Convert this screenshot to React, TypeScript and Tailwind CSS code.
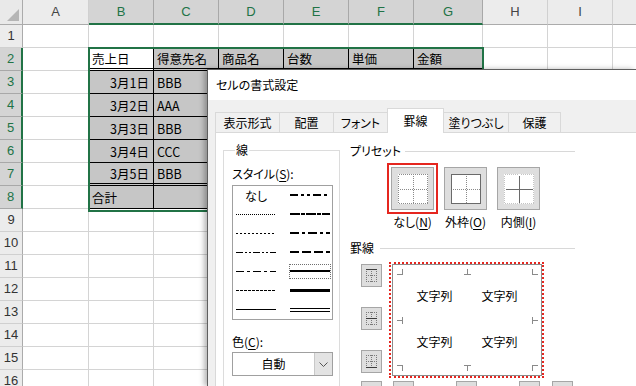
import React from "react";

// Excel のシート + 「セルの書式設定」ダイアログ(罫線タブ)
const COLS = ["A", "B", "C", "D", "E", "F", "G", "H", "I", "J"];
const SEL = new Set(["B", "C", "D", "E", "F", "G"]);
const ROWS = Array.from({ length: 16 }, (_, i) => i + 1);

const DATA: Record<string, string> = {
  B2: "売上日",
  C2: "得意先名",
  D2: "商品名",
  E2: "台数",
  F2: "単価",
  G2: "金額",
  B3: "3月1日",
  C3: "BBB",
  B4: "3月2日",
  C4: "AAA",
  B5: "3月3日",
  C5: "BBB",
  B6: "3月4日",
  C6: "CCC",
  B7: "3月5日",
  C7: "BBB",
  B8: "合計",
};

function Corner() {
  return (
    <div className="flex items-end justify-end border-b border-r border-[#ababab] bg-[#e9e9e9] p-[3px]">
      <svg width="12" height="12">
        <polygon points="12,0 12,12 0,12" fill="#b5b5b5" />
      </svg>
    </div>
  );
}

function ColHead({ c }: { c: string }) {
  const sel = SEL.has(c);
  return (
    <div
      className={
        sel
          ? "flex items-center justify-center border-r border-r-[#a8a8a8] border-b-2 border-b-[#217346] bg-[#d4d4d4] text-[13px] text-[#217346] [font-family:'Liberation_Sans',sans-serif]"
          : "flex items-center justify-center border-r border-r-[#d0d0d0] border-b border-b-[#ababab] bg-[#ececec] text-[13px] text-[#444] [font-family:'Liberation_Sans',sans-serif]"
      }
    >
      {c}
    </div>
  );
}

function RowHead({ r }: { r: number }) {
  const sel = r >= 2 && r <= 8;
  return (
    <div
      className={
        sel
          ? "flex items-center justify-center border-b border-b-[#a8a8a8] border-r-2 border-r-[#217346] bg-[#d4d4d4] text-[13px] text-[#217346] [font-family:'Liberation_Sans',sans-serif]"
          : "flex items-center justify-center border-b border-b-[#d0d0d0] border-r border-r-[#ababab] bg-[#ececec] text-[13px] text-[#333] [font-family:'Liberation_Sans',sans-serif]"
      }
    >
      {r}
    </div>
  );
}

function Cell({ c, r }: { c: string; r: number }) {
  const v = DATA[c + r];
  const inTable = SEL.has(c) && r >= 2 && r <= 8;
  const right = c === "B" && r >= 3 && r <= 7;
  let cls = "border-b border-r border-[#d4d4d4] bg-white";
  if (inTable) {
    const bg = c === "B" && r === 2 ? "bg-white" : "bg-[#c6c6c6]";
    const bottom =
      r === 2 || r === 7
        ? "border-b-[3px] border-double border-b-black"
        : "border-b border-b-black";
    cls = `${bg} border-r border-r-black ${bottom}`;
  }
  return (
    <div
      className={`${cls} flex items-center overflow-hidden whitespace-nowrap pt-[2px] text-[12.5px] text-black ${
        right ? "justify-end pr-[4px]" : "pl-[3px]"
      }`}
    >
      {v}
    </div>
  );
}

function Sheet() {
  return (
    <div className="relative">
      <div className="grid grid-cols-[23px_66px_65px_65px_65px_65px_65px_69px_65px_65px_65px] grid-rows-[25px_repeat(16,23px)]">
        <Corner />
        {COLS.map((c) => (
          <ColHead key={c} c={c} />
        ))}
        {ROWS.map((r) => (
          <React.Fragment key={r}>
            <RowHead r={r} />
            {COLS.map((c) => (
              <Cell key={c} c={c} r={r} />
            ))}
          </React.Fragment>
        ))}
      </div>
      {/* 選択範囲 B2:G8 */}
      <div className="absolute left-[88px] top-[47px] h-[165px] w-[396px] border-2 border-[#217346]" />
    </div>
  );
}

type Line = { dash?: string; w?: number; kind?: "text" | "double" | "sel" };

const LEFT_LINES: Line[] = [
  { kind: "text" },
  { dash: "1 1", w: 1 },
  { dash: "2 2", w: 1 },
  { dash: "7 2 2 2 2 2", w: 1 },
  { dash: "8 3 3 3", w: 1 },
  { dash: "3 1", w: 1 },
  { w: 1 },
];

const RIGHT_LINES: Line[] = [
  { dash: "8 3 3 3 3 3", w: 2 },
  { dash: "10 1 4 1", w: 2 },
  { dash: "9 3 3 3", w: 2 },
  { dash: "9 3", w: 2 },
  { kind: "sel", w: 2 },
  { w: 3 },
  { kind: "double" },
];

function LineSample({ l }: { l: Line }) {
  if (l.kind === "text") {
    return <div className="w-[40px] text-center leading-[19px]">なし</div>;
  }
  const svg = (
    <svg width="40" height="11" shapeRendering="crispEdges">
      {l.kind === "double" ? (
        <>
          <line x1="0" x2="40" y1="4.5" y2="4.5" stroke="#000" />
          <line x1="0" x2="40" y1="7.5" y2="7.5" stroke="#000" />
        </>
      ) : (
        <line
          x1="0"
          x2="40"
          y1={l.w === 2 ? 5 : 5.5}
          y2={l.w === 2 ? 5 : 5.5}
          stroke="#000"
          strokeWidth={l.w}
          strokeDasharray={l.dash}
        />
      )}
    </svg>
  );
  if (l.kind === "sel") {
    return (
      <div className="-ml-[1px] flex h-[15px] w-[42px] items-center border border-dotted border-[#6f6f6f]">
        {svg}
      </div>
    );
  }
  return svg;
}

function StyleList() {
  return (
    <div className="mt-[3px] h-[135px] w-[101px] border border-[#a0a0a0] bg-white">
      {LEFT_LINES.map((l, i) => (
        <div key={i} className="flex h-[19px]">
          <div className="flex w-[50px] items-center pl-[3px]">
            <LineSample l={l} />
          </div>
          <div className="flex items-center pl-[7px]">
            <LineSample l={RIGHT_LINES[i]} />
          </div>
        </div>
      ))}
    </div>
  );
}

function PresetIcon({ outline, cross }: { outline: "dot" | "solid" | "faint"; cross: "dot" | "solid" }) {
  const o =
    outline === "solid"
      ? { stroke: "#6a6a6a" }
      : outline === "dot"
      ? { stroke: "#8a8a8a", strokeDasharray: "1 1" }
      : { stroke: "#c4c4c4", strokeDasharray: "1 1" };
  const x = cross === "solid" ? { stroke: "#6a6a6a" } : { stroke: "#8a8a8a", strokeDasharray: "1 1" };
  return (
    <svg width="30" height="30" shapeRendering="crispEdges">
      <rect x="0" y="0" width="30" height="30" fill="#fff" />
      <rect x="0.5" y="0.5" width="29" height="29" fill="none" {...o} />
      <line x1="15.5" x2="15.5" y1="2" y2="29" {...x} />
      <line x1="2" x2="29" y1="15.5" y2="15.5" {...x} />
    </svg>
  );
}

function Preset({
  label,
  hot,
  selected,
  outline,
  cross,
}: {
  label: string;
  hot: string;
  selected?: boolean;
  outline: "dot" | "solid" | "faint";
  cross: "dot" | "solid";
}) {
  return (
    <div className="flex w-[51px] flex-col items-center">
      <div
        className={
          selected
            ? "border-2 border-[#e5261f] p-[2px]"
            : "border-2 border-transparent p-[2px]"
        }
      >
        <div className="flex h-[43px] w-[43px] items-center justify-center border border-[#a6a6a6] bg-[#dedede]">
          <PresetIcon outline={outline} cross={cross} />
        </div>
      </div>
      <div className="mt-[1px] whitespace-nowrap leading-[14px]">
        {label}(<span className="underline underline-offset-2">{hot}</span>)
      </div>
    </div>
  );
}

function EdgeIcon({ solid }: { solid: "top" | "mid" | "bottom" }) {
  const dot = { stroke: "#7a7a7a", strokeDasharray: "1 1" };
  const sol = { stroke: "#3c3c3c" };
  return (
    <svg width="11" height="13" shapeRendering="crispEdges">
      <line x1="0.5" x2="0.5" y1="0" y2="13" {...dot} />
      <line x1="10.5" x2="10.5" y1="0" y2="13" {...dot} />
      <line x1="5.5" x2="5.5" y1="0" y2="13" {...dot} />
      <line x1="0" x2="11" y1="0.5" y2="0.5" {...(solid === "top" ? sol : dot)} />
      <line x1="0" x2="11" y1="6.5" y2="6.5" {...(solid === "mid" ? sol : dot)} />
      <line x1="0" x2="11" y1="12.5" y2="12.5" {...(solid === "bottom" ? sol : dot)} />
    </svg>
  );
}

function EdgeButton({ solid }: { solid?: "top" | "mid" | "bottom" }) {
  return (
    <div className="flex h-[23px] w-[21px] items-center justify-center border border-[#a6a6a6] bg-[#dedede]">
      {solid && <EdgeIcon solid={solid} />}
    </div>
  );
}

function Preview() {
  const g = "#8a8a8a";
  return (
    <div className="ml-[7px] h-[116px] w-[155px] border-2 border-dotted border-[#e5261f] pl-[1px]">
      <div className="relative h-[112px] w-[150px] border border-[#8c8c8c] bg-white">
        <svg className="absolute left-0 top-0" width="150" height="112" shapeRendering="crispEdges">
          <g stroke={g}>
            <path d="M4 9.5H9.5V4" fill="none" />
            <path d="M145 9.5H139.5V4" fill="none" />
            <path d="M4 100.5H9.5V106" fill="none" />
            <path d="M145 100.5H139.5V106" fill="none" />
            <path d="M71 9.5H78M74.5 9.5V4" fill="none" />
            <path d="M71 100.5H78M74.5 100.5V106" fill="none" />
            <path d="M9.5 52V59M9.5 55.5H4" fill="none" />
            <path d="M139.5 52V59M139.5 55.5H145" fill="none" />
          </g>
        </svg>
        <div className="relative ml-[9px] mt-[8px] grid h-[92px] w-[130px] grid-cols-2 grid-rows-2 text-[12px] text-black">
          <div className="flex items-center justify-center">文字列</div>
          <div className="flex items-center justify-center">文字列</div>
          <div className="flex items-center justify-center">文字列</div>
          <div className="flex items-center justify-center">文字列</div>
        </div>
      </div>
    </div>
  );
}

const TABS = [
  { label: "表示形式", cls: "w-[65px]" },
  { label: "配置", cls: "w-[55px]" },
  { label: "フォント", cls: "w-[55px]" },
  { label: "罫線", cls: "w-[57px]", active: true },
  { label: "塗りつぶし", cls: "w-[66px]" },
  { label: "保護", cls: "w-[53px]" },
];

function Dialog() {
  return (
    <div className="absolute left-[207px] top-[69px] flex h-[317px] w-[429px] flex-col border-l border-t border-[#5f5f5f] bg-[#f0f0f0] text-[12px] text-black shadow-[-3px_0_5px_rgba(0,0,0,0.28)] [font-feature-settings:'palt']">
      <div className="flex h-[30px] shrink-0 items-center bg-white pl-[8px]">セルの書式設定</div>
      <div className="flex h-[32px] shrink-0 items-end pl-[7px]">
        {TABS.map((t) => (
          <div
            key={t.label}
            className={
              t.active
                ? `${t.cls} relative z-10 -mb-px -ml-px flex h-[25px] items-center justify-center border border-b-0 border-[#d9d9d9] bg-white`
                : `${t.cls} -ml-px flex h-[20px] items-center justify-center border border-b-0 border-[#d9d9d9] bg-[#f0f0f0] first:ml-0`
            }
          >
            {t.label}
          </div>
        ))}
      </div>
      <div className="ml-[7px] flex flex-1 border-l border-t border-[#d9d9d9] bg-white">
        <fieldset className="ml-[7px] mt-[9px] h-[260px] w-[117px] shrink-0 border border-[#dcdcdc] pl-[8px]">
          <legend className="ml-[3px] px-[1px] leading-[16px]">線</legend>
          <div className="mt-[8px] leading-[16px]">
            スタイル(<span className="underline underline-offset-2">S</span>):
          </div>
          <StyleList />
          <div className="mt-[14px] leading-[16px]">
            色(<span className="underline underline-offset-2">C</span>):
          </div>
          <div className="mt-[2px] flex h-[24px] w-[101px] border border-[#a0a0a0] bg-white">
            <div className="flex flex-1 items-center justify-center">自動</div>
            <div className="flex w-[18px] items-center justify-center border-l border-[#c8c8c8] bg-[#e3e3e3]">
              <svg width="9" height="5">
                <polyline points="0.5,0.5 4.5,4.5 8.5,0.5" fill="none" stroke="#555" />
              </svg>
            </div>
          </div>
        </fieldset>

        <div className="ml-[10px] w-[225px] shrink-0">
          <div className="mt-[10px] flex h-[16px] items-center">
            <span>プリセット</span>
            <div className="ml-[4px] h-px flex-1 bg-[#d8d8d8]" />
          </div>
          <div className="mt-[4px] flex gap-[2px] pl-[37px]">
            <Preset label="なし" hot="N" selected outline="dot" cross="dot" />
            <Preset label="外枠" hot="O" outline="solid" cross="dot" />
            <Preset label="内側" hot="I" outline="faint" cross="solid" />
          </div>
          <div className="mt-[11px] flex h-[16px] items-center">
            <span>罫線</span>
            <div className="ml-[6px] h-px flex-1 bg-[#d8d8d8]" />
          </div>
          <div className="mt-[6px] flex">
            <div className="ml-[11px] flex flex-col gap-[20px] pt-[2px]">
              <EdgeButton solid="top" />
              <EdgeButton solid="mid" />
              <EdgeButton solid="bottom" />
            </div>
            <Preview />
          </div>
          <div className="mt-[3px] flex pl-[11px]">
            <EdgeButton />
            <div className="ml-[11px]">
              <EdgeButton />
            </div>
            <div className="ml-[42px]">
              <EdgeButton />
            </div>
            <div className="ml-[42px]">
              <EdgeButton />
            </div>
            <div className="ml-[12px]">
              <EdgeButton />
            </div>
          </div>
        </div>
      </div>
    </div>
  );
}

export default function App() {
  return (
    <div className="relative h-[386px] w-[636px] overflow-hidden bg-white [font-family:'Noto_Sans_CJK_JP',sans-serif]">
      <Sheet />
      <Dialog />
    </div>
  );
}
